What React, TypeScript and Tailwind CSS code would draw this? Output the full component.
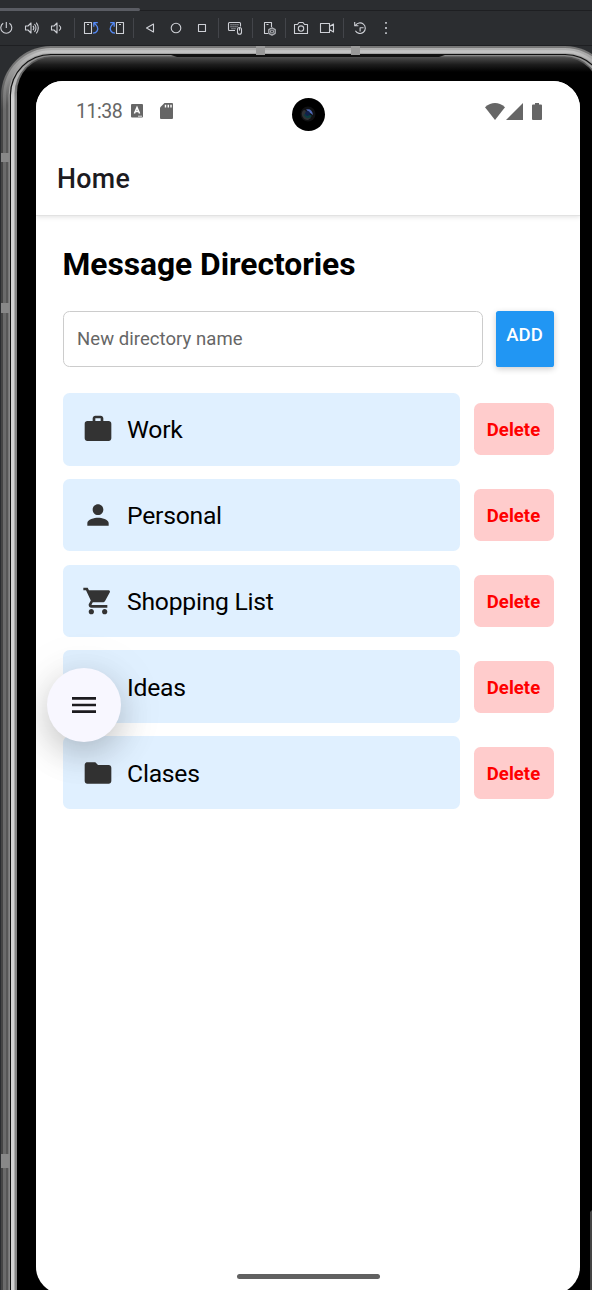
import type { ReactNode } from "react";
import { MdFolder, MdLightbulb, MdMenu, MdPerson, MdShoppingCart, MdWork } from "react-icons/md";

function Tool({ children }: { children: ReactNode }) {
  return (
    <button className="flex w-[26px] shrink-0 items-center justify-center">
      <svg
        viewBox="-8 -8 16 16"
        className="size-4 overflow-visible"
        fill="none"
        stroke="#ced0d6"
        strokeWidth="1.1"
        strokeLinejoin="round"
      >
        {children}
      </svg>
    </button>
  );
}

function Separator({ width }: { width: string }) {
  return (
    <div className={`flex shrink-0 justify-center ${width}`}>
      <div className="h-5 w-px bg-[#43454a]" />
    </div>
  );
}

const speaker = "M-5.5-2H-3L0-5V5L-3 2H-5.5Z";

function Toolbar() {
  return (
    <header className="h-[46px] shrink-0 border-b border-[#1e1f22] bg-[#2b2d30]">
      <div className="flex h-[11px] items-end border-b border-[#1e1f22]">
        <div className="-mb-px h-[3px] w-[140px] rounded-r-full bg-[#5a5c63]" />
      </div>
      <div className="-ml-2 flex h-[34px] items-center">
        <Tool>
          <path d="M-1.8-4.8A5.5 5.5 0 1 0 4.4-4.8M1.3-6V0" />
        </Tool>
        <Tool>
          <path d={speaker} />
          <path d="M2-2.2Q3.8 0 2 2.2M3.5-4Q6.5 0 3.5 4M5.3-5.4Q9.3 0 5.3 5.4" />
        </Tool>
        <Tool>
          <path d={speaker} />
          <path d="M2-2.6Q5.5 0 2 2.6" />
        </Tool>
        <Separator width="w-2" />
        <Tool>
          <path d="M-6.5-5.5H.5V5.5H-6.5ZM-4-3.5H-2" />
          <path d="M2 5.2C6 5 7.7 1.5 6.2-1.5Q5-3.5 2.8-5.3M2.8-1.3V-5.4H6.8" stroke="#548af7" strokeWidth="1.3" />
        </Tool>
        <Tool>
          <path d="M-.5-5.5H6.5V5.5H-.5ZM2-3.5H4" />
          <path d="M-2 5.2C-6 5-7.7 1.5-6.2-1.5Q-5-3.5-2.8-5.3M-2.8-1.3V-5.4H-6.8" stroke="#548af7" strokeWidth="1.3" />
        </Tool>
        <Separator width="w-[7px]" />
        <Tool>
          <path d="M3.5-4V4L-3.5 0Z" />
        </Tool>
        <Tool>
          <circle r="4.8" />
        </Tool>
        <Tool>
          <rect x="-3.5" y="-3.5" width="7" height="7" />
        </Tool>
        <Separator width="w-[7px]" />
        <Tool>
          <path d="M0 2.5H-5.5Q-6.5 2.5-6.5 1.5V-4.5Q-6.5-5.5-5.5-5.5H4.5Q5.5-5.5 5.5-4.5V-1.5" />
          <path d="M-4.5-3.2H4M-4.5-1.2H3.5M-3.5 .7H1" strokeDasharray="1.1 .9" />
          <rect x="2.5" y="-.5" width="4" height="6.8" rx="2" />
          <path d="M4.5 0V2.6" />
        </Tool>
        <Separator width="w-2" />
        <Tool>
          <path d="M-1 5.5H-4.5V-5.5H2.5V-1M-2.5-3.5H-.5" />
          <path d="M3-.1 6.2 1.7V5.3L3 7.1-.2 5.3V1.7Z" stroke="#a9abb0" strokeWidth="1.4" />
          <circle cx="3" cy="3.5" r="1.5" stroke="#a9abb0" />
        </Tool>
        <Separator width="w-1.5" />
        <Tool>
          <path d="M-6.5-3.5H-3.5L-2-5.5H2L3.5-3.5H6.5V5.5H-6.5Z" />
          <circle cy=".6" r="2.7" />
        </Tool>
        <Tool>
          <path d="M-6.5-4.5H2.5V4.5H-6.5ZM2.5-1.5 6.5-4V4L2.5 1.5" />
        </Tool>
        <Separator width="w-[7px]" />
        <Tool>
          <path d="M-4.6-2.5A5.3 5.3 0 1 1-4.6 2.8M-5.3-6V-2.3H-1.6M.1 3.6V-.3H3.6" />
        </Tool>
        <Tool>
          <path d="M-.8-5.2H.8M-.8 0H.8M-.8 5.2H.8" strokeWidth="1.8" />
        </Tool>
      </div>
    </header>
  );
}

function Ring({ x, y, r, fill }: { x: number; y: number; r: number; fill: string }) {
  return <rect x={x} y={y} width={(308 - x) * 2} height="1400" rx={r} fill={fill} />;
}

function Bezel() {
  return (
    <svg className="absolute inset-0 h-full w-full" viewBox="0 46 592 1244">
      <defs>
        <linearGradient id="edge" gradientUnits="userSpaceOnUse" x1="0" y1="46" x2="0" y2="110">
          <stop offset="0" stopColor="#777777" />
          <stop offset=".4" stopColor="#757575" />
          <stop offset="1" stopColor="#454545" />
        </linearGradient>
        <linearGradient id="metal" gradientUnits="userSpaceOnUse" x1="0" y1="46" x2="0" y2="110">
          <stop offset="0" stopColor="#b2b2b2" />
          <stop offset=".4" stopColor="#969696" />
          <stop offset="1" stopColor="#6b6b6b" />
        </linearGradient>
        <linearGradient id="shine" gradientUnits="userSpaceOnUse" x1="0" y1="50" x2="0" y2="105">
          <stop offset="0" stopColor="#c6c6c6" />
          <stop offset="1" stopColor="#575757" />
        </linearGradient>
        <linearGradient id="inner" gradientUnits="userSpaceOnUse" x1="0" y1="55" x2="0" y2="100">
          <stop offset="0" stopColor="#858585" />
          <stop offset=".4" stopColor="#b0b0b0" />
          <stop offset="1" stopColor="#d2d2d2" />
        </linearGradient>
        <linearGradient id="lip" gradientUnits="userSpaceOnUse" x1="0" y1="56" x2="0" y2="100">
          <stop offset="0" stopColor="#555555" />
          <stop offset="1" stopColor="#858585" />
        </linearGradient>
        <linearGradient id="glass" gradientUnits="userSpaceOnUse" x1="0" y1="57" x2="0" y2="72">
          <stop offset="0" stopColor="#4d4d4d" />
          <stop offset=".5" stopColor="#1d1d1d" />
          <stop offset="1" stopColor="#000000" />
        </linearGradient>
      </defs>
      <Ring x={1} y={46} r={50} fill="url(#edge)" />
      <Ring x={3} y={48} r={48} fill="url(#metal)" />
      <Ring x={6} y={50.3} r={45} fill="url(#shine)" />
      <Ring x={8.6} y={53} r={42} fill="#a4a4a4" />
      <Ring x={9.8} y={54} r={41} fill="#101010" />
      <Ring x={11} y={55} r={40} fill="url(#inner)" />
      <Ring x={14.5} y={56.3} r={37} fill="url(#lip)" />
      <Ring x={17} y={57.3} r={35} fill="url(#glass)" />
      <path d="M168 54H448L439 57H177Z" fill="#111111" />
      <path d="M256 46h9v9h-9zM351 46h9v9h-9z" fill="#999999" />
      <path d="M1 153h8v9H1zM1 303h8v10H1zM1 1154h8v14H1z" fill="#888888" />
      <path d="M590 1290V1212l2-2v80z" fill="#444444" />
    </svg>
  );
}

function StatusBar() {
  return (
    <div className="relative z-10 flex h-[60px] shrink-0 items-center bg-white pl-10 pr-[38px] text-[#666666]">
      <span className="w-[55px] pt-[2px] text-[19.5px] leading-none tracking-[-0.45px]">11:38</span>
      <svg viewBox="0 0 12 14" className="h-[14px] w-3">
        <rect width="12" height="13.5" rx="1" fill="currentColor" />
        <path d="M3.4 9.5 6 3.4 8.6 9.5M4.4 7.6H7.6" fill="none" stroke="#fff" strokeWidth="1.5" />
        <path d="M7 12.2H11" stroke="#fff" strokeWidth=".8" />
      </svg>
      <svg viewBox="0 0 13 16" className="ml-[17px] h-4 w-[13px]">
        <path d="M4.5 0H12Q13 0 13 1V15Q13 16 12 16H1Q0 16 0 15V4.5Z" fill="currentColor" />
        <path d="M5.5 1.8V4.5M8.3 1.8V4.5M11 1.8V4.5" stroke="#fff" strokeWidth="1.4" />
      </svg>
      <div className="ml-[118.5px] mt-[6px] flex size-[33px] items-center justify-center rounded-full bg-black">
        <svg viewBox="0 0 16 16" className="size-4">
          <circle cx="8" cy="8" r="7.5" fill="#101113" />
          <path d="M3 4.5A6 6 0 0 0 8 14L11 12 5 4Z" fill="#303235" />
          <path d="M3.5 9Q7 6 12 10Q9 13 6 11.5Z" fill="#0a3d40" />
          <path d="M6 3.5Q12 2 13 9L9.5 6.5Z" fill="#526bb8" />
          <circle cx="7.5" cy="7.5" r="2.4" fill="#10204a" />
        </svg>
      </div>
      <div className="ml-auto flex items-center">
        <svg viewBox="0 0 20 17" className="h-[17px] w-5">
          <path d="M0 4.2Q10-4 20 4.2L10 17Z" fill="currentColor" />
        </svg>
        <svg viewBox="0 0 17 17" className="ml-px h-[17px] w-[17px]">
          <path d="M17 0V17H0Z" fill="currentColor" />
        </svg>
        <svg viewBox="0 0 10 17" className="ml-[9px] h-[17px] w-2.5">
          <path d="M3 0H7V1.5H9Q10 1.5 10 2.5V16Q10 17 9 17H1Q0 17 0 16V2.5Q0 1.5 1 1.5H3Z" fill="currentColor" />
        </svg>
      </div>
    </div>
  );
}

const directories = [
  { name: "Work", Icon: MdWork },
  { name: "Personal", Icon: MdPerson },
  { name: "Shopping List", Icon: MdShoppingCart },
  { name: "Ideas", Icon: MdLightbulb },
  { name: "Clases", Icon: MdFolder },
];

export default function App() {
  return (
    <div className="flex h-[1290px] w-[592px] flex-col overflow-hidden bg-[#2b2d30] font-['Roboto',sans-serif]">
      <Toolbar />
      <div className="relative h-[1244px] overflow-hidden pl-9 pt-[35px]">
        <Bezel />
        <main className="relative flex h-[1213px] w-[544px] flex-col overflow-hidden rounded-[27px] bg-white">
          <StatusBar />
          <div className="flex h-[75px] shrink-0 items-center border-b border-[#e2e2e2] pl-[21px] pt-[3px] shadow-[0_1px_5px_rgba(0,0,0,0.12)]">
            <h1 className="text-[26.8px] font-medium leading-none tracking-[0.3px] text-[#1c1b1f]">Home</h1>
          </div>
          <section className="flex flex-col px-[26.5px] pt-7">
            <h2 className="h-10 text-[31.8px] font-bold leading-10 tracking-[-0.05px] text-black">Message Directories</h2>
            <div className="mt-[26.5px] flex gap-[13px]">
              <input
                placeholder="New directory name"
                className="h-[56.5px] w-[420.5px] rounded-[6.5px] border border-[#cccccc] px-[13.5px] text-[18.5px] tracking-[0.06px] text-black outline-none placeholder:text-[#666666]"
              />
              <button className="h-[56.5px] w-[58px] rounded-[2.6px] bg-[#2196f3] pb-1.5 text-[18.5px] font-medium text-white shadow-[0_2px_6px_rgba(0,0,0,0.2)]">
                ADD
              </button>
            </div>
            <ul className="mt-[26.1px] flex flex-col gap-[13.3px]">
              {directories.map(({ name, Icon }) => (
                <li key={name} className="flex h-[72.5px] items-center justify-between">
                  <div className="flex h-full w-[397.5px] items-center rounded-[6.5px] bg-[#e0f0ff] pl-[19.4px]">
                    <Icon className="size-8 text-[#333333]" />
                    <span className="ml-[13.2px] pt-[3px] text-[24.7px] leading-none tracking-[-0.25px] text-black">
                      {name}
                    </span>
                  </div>
                  <button className="h-[52px] w-20 rounded-[6.5px] bg-[#ffcccc] pt-1 text-[18.5px] font-bold tracking-[0.05px] text-[#ff0000]">
                    Delete
                  </button>
                </li>
              ))}
            </ul>
          </section>
          <div className="mb-[15px] mt-auto h-[5px] w-[143px] self-center rounded-full bg-[#616161]" />
          <button className="absolute left-[10.7px] top-[586.7px] flex size-[74px] items-center justify-center rounded-full bg-[#f8f7ff] shadow-[0_12px_34px_rgba(0,0,0,0.2),0_4px_60px_rgba(0,0,0,0.07)]">
            <MdMenu className="size-8 text-[#1c1b1f]" />
          </button>
        </main>
      </div>
    </div>
  );
}
